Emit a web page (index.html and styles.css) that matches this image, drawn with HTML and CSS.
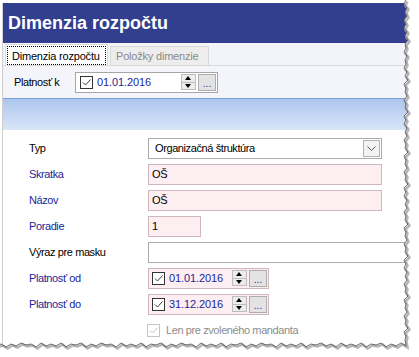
FILE: index.html
```html
<!DOCTYPE html>
<html lang="sk">
<head>
  <meta charset="UTF-8">
  <title>Dimenzia rozpočtu</title>
  <link rel="stylesheet" href="styles.css">
</head>
<body>
  <div class="shot">
    <div class="window">
      <div class="title">Dimenzia rozpočtu</div>

      <div class="tabs">
        <div class="tab active"><span>Dimenzia rozpočtu</span></div>
        <div class="tab">Položky dimenzie</div>
      </div>

      <div class="filter">
        <span class="lbl">Platnosť k</span>
        <div class="date plain">
          <span class="chk"><svg width="11" height="11" viewBox="0 0 11 11"><path d="M2 5.5 L4.5 8 L9.5 2.5" fill="none" stroke="#3c3c3c" stroke-width="1"/></svg></span>
          <span class="val">01.01.2016</span>
          <span class="spin"><i class="up"></i><i class="down"></i></span>
          <span class="more">...</span>
        </div>
      </div>

      <div class="band"></div>

      <div class="form">
        <label>Typ</label>
        <div class="field sel w-full">
          <span>Organizačná štruktúra</span>
          <span class="drop"><svg width="9" height="5" viewBox="0 0 9 5"><path d="M0.5 0.5 L4.5 4.5 L8.5 0.5" fill="none" stroke="#555" stroke-width="1"/></svg></span>
        </div>

        <label class="req">Skratka</label>
        <div class="field pink w-full">OŠ</div>

        <label class="req">Názov</label>
        <div class="field pink w-full">OŠ</div>

        <label class="req">Poradie</label>
        <div class="field pink w-short">1</div>

        <label>Výraz pre masku</label>
        <div class="field w-long"></div>

        <label class="req">Platnosť od</label>
        <div class="date pink">
          <span class="chk"><svg width="11" height="11" viewBox="0 0 11 11"><path d="M2 5.5 L4.5 8 L9.5 2.5" fill="none" stroke="#3c3c3c" stroke-width="1"/></svg></span>
          <span class="val">01.01.2016</span>
          <span class="spin"><i class="up"></i><i class="down"></i></span>
          <span class="more">...</span>
        </div>

        <label class="req">Platnosť do</label>
        <div class="date pink">
          <span class="chk"><svg width="11" height="11" viewBox="0 0 11 11"><path d="M2 5.5 L4.5 8 L9.5 2.5" fill="none" stroke="#3c3c3c" stroke-width="1"/></svg></span>
          <span class="val">31.12.2016</span>
          <span class="spin"><i class="up"></i><i class="down"></i></span>
          <span class="more">...</span>
        </div>

        <span></span>
        <div class="check off">
          <span class="chk"><svg width="11" height="11" viewBox="0 0 11 11"><path d="M2 5.5 L4.5 8 L9.5 2.5" fill="none" stroke="#c4c4c4" stroke-width="1"/></svg></span>
          <span>Len pre zvoleného mandanta</span>
        </div>
      </div>
    </div>

    <!-- torn paper edge -->
    <svg class="tear" width="419" height="357" viewBox="0 0 419 357">
      <path fill="#fff" d="M406,-2 L406,0 404,4 407,8 405,12 407,16 404,20 406,24 404,28 407,32 405,36 408,40 405,44 406,48 404,52 407,56 405,60 406,64 404,68 407,72 405,76 408,80 404,84 406,88 405,92 407,96 404,100 406,104 405,108 408,112 404,116 406,120 404,124 407,128 405,132 407,136 404,140 406,144 405,148 408,152 404,156 406,160 405,164 407,168 404,172 406,176 405,180 408,184 404,188 406,192 404,196 407,200 405,204 407,208 404,212 406,216 405,220 408,224 404,228 406,232 405,236 407,240 404,244 406,248 405,252 408,256 404,260 406,264 404,268 407,272 405,276 407,280 404,284 406,288 405,292 408,296 404,300 406,304 405,308 407,312 404,316 406,320 405,324 408,328 404,332 406,336 405,340 406,346 401,343 396,346 391,344 386,347 381,343 376,345 371,344 366,347 361,343 356,346 351,344 346,346 341,343 336,347 331,344 326,346 321,343 316,345 311,344 306,347 301,343 296,346 291,344 286,346 281,343 276,347 271,344 266,345 261,343 256,346 251,344 246,347 241,343 236,345 231,344 226,347 221,343 216,346 211,344 206,346 201,343 196,347 191,344 186,345 181,343 176,346 171,344 166,347 161,343 156,345 151,344 146,347 141,343 136,346 131,344 126,346 121,343 116,347 111,344 106,345 101,343 96,346 91,344 86,347 81,343 76,345 71,344 66,347 61,343 56,346 51,344 46,346 41,343 36,347 31,344 26,345 21,343 16,346 11,344 6,347 1,344 -2,345 L-2,360 L425,360 L425,-2 Z"/>
      <polyline class="shade" points="406,0 404,4 407,8 405,12 407,16 404,20 406,24 404,28 407,32 405,36 408,40 405,44 406,48 404,52 407,56 405,60 406,64 404,68 407,72 405,76 408,80 404,84 406,88 405,92 407,96 404,100 406,104 405,108 408,112 404,116 406,120 404,124 407,128 405,132 407,136 404,140 406,144 405,148 408,152 404,156 406,160 405,164 407,168 404,172 406,176 405,180 408,184 404,188 406,192 404,196 407,200 405,204 407,208 404,212 406,216 405,220 408,224 404,228 406,232 405,236 407,240 404,244 406,248 405,252 408,256 404,260 406,264 404,268 407,272 405,276 407,280 404,284 406,288 405,292 408,296 404,300 406,304 405,308 407,312 404,316 406,320 405,324 408,328 404,332 406,336 405,340 406,346 401,343 396,346 391,344 386,347 381,343 376,345 371,344 366,347 361,343 356,346 351,344 346,346 341,343 336,347 331,344 326,346 321,343 316,345 311,344 306,347 301,343 296,346 291,344 286,346 281,343 276,347 271,344 266,345 261,343 256,346 251,344 246,347 241,343 236,345 231,344 226,347 221,343 216,346 211,344 206,346 201,343 196,347 191,344 186,345 181,343 176,346 171,344 166,347 161,343 156,345 151,344 146,347 141,343 136,346 131,344 126,346 121,343 116,347 111,344 106,345 101,343 96,346 91,344 86,347 81,343 76,345 71,344 66,347 61,343 56,346 51,344 46,346 41,343 36,347 31,344 26,345 21,343 16,346 11,344 6,347 1,344 -2,345"/>
      <polyline class="edge" points="406,0 404,4 407,8 405,12 407,16 404,20 406,24 404,28 407,32 405,36 408,40 405,44 406,48 404,52 407,56 405,60 406,64 404,68 407,72 405,76 408,80 404,84 406,88 405,92 407,96 404,100 406,104 405,108 408,112 404,116 406,120 404,124 407,128 405,132 407,136 404,140 406,144 405,148 408,152 404,156 406,160 405,164 407,168 404,172 406,176 405,180 408,184 404,188 406,192 404,196 407,200 405,204 407,208 404,212 406,216 405,220 408,224 404,228 406,232 405,236 407,240 404,244 406,248 405,252 408,256 404,260 406,264 404,268 407,272 405,276 407,280 404,284 406,288 405,292 408,296 404,300 406,304 405,308 407,312 404,316 406,320 405,324 408,328 404,332 406,336 405,340 406,346 401,343 396,346 391,344 386,347 381,343 376,345 371,344 366,347 361,343 356,346 351,344 346,346 341,343 336,347 331,344 326,346 321,343 316,345 311,344 306,347 301,343 296,346 291,344 286,346 281,343 276,347 271,344 266,345 261,343 256,346 251,344 246,347 241,343 236,345 231,344 226,347 221,343 216,346 211,344 206,346 201,343 196,347 191,344 186,345 181,343 176,346 171,344 166,347 161,343 156,345 151,344 146,347 141,343 136,346 131,344 126,346 121,343 116,347 111,344 106,345 101,343 96,346 91,344 86,347 81,343 76,345 71,344 66,347 61,343 56,346 51,344 46,346 41,343 36,347 31,344 26,345 21,343 16,346 11,344 6,347 1,344 -2,345"/>
    </svg>
  </div>
</body>
</html>
```

FILE: styles.css
```css
body {
  margin: 0;
  background: #fff;
  font-family: "Liberation Sans", Arial, sans-serif;
  font-size: 11px;
  letter-spacing: -0.4px;
  color: #000;
}

.shot {
  position: relative;
  width: 419px;
  height: 357px;
  overflow: hidden;
}

.window {
  margin: 3px 0 0 2px;
  border-left: 1px solid #cfcfcf;
  width: 416px;
  height: 354px;
}

.title {
  height: 40px;
  line-height: 40px;
  padding-left: 5px;
  background: #323f8f;
  color: #fff;
  font-size: 18px;
  font-weight: bold;
  letter-spacing: 0;
}

.tabs {
  display: flex;
  align-items: flex-end;
  height: 22px;
  padding-left: 2px;
  background: #f2f4f9;
  border-bottom: 1px solid #d9d9d9;
  white-space: nowrap;
  letter-spacing: -0.2px;
}

.tab {
  box-sizing: border-box;
  height: 19px;
  width: 99px;
  margin-left: 2px;
  padding-left: 5px;
  line-height: 18px;
  background: #ededed;
  border: 1px solid #d9d9d9;
  border-bottom: none;
  color: #8a8a8a;
}

.tab.active {
  width: 103px;
  height: 21px;
  margin-left: 0;
  padding: 1px 1px 0 1px;
  background: #fff;
  color: #000;
}

.tab.active span {
  display: block;
  height: 19px;
  line-height: 18px;
  padding-left: 4px;
  border: 1px dotted #000;
  box-sizing: border-box;
}

.filter {
  display: flex;
  align-items: center;
  height: 32px;
  padding-left: 11px;
  background: #f3f5fa;
}

.lbl {
  width: 61px;
}

.band {
  height: 31px;
  border-top: 1px solid #7aa0dc;
  background: linear-gradient(#adc6ee, #d9e5f8);
}

.form {
  display: grid;
  grid-template-columns: 119px 1fr;
  grid-auto-rows: 26px;
  align-items: center;
  padding: 5px 0 0 26px;
}

.form label.req {
  color: #1b2796;
}

.field {
  box-sizing: border-box;
  height: 21px;
  line-height: 19px;
  padding-left: 3px;
  background: #fff;
  border: 1px solid #ababab;
}

.pink {
  background: #fdeef2;
  border-color: #cfb7bd;
}

.w-full { width: 234px; }
.w-short { width: 53px; }
.w-long { width: 300px; }

.sel {
  display: flex;
  align-items: center;
  justify-content: space-between;
  padding: 0 1px 0 6px;
}

.drop {
  display: flex;
  align-items: center;
  justify-content: center;
  width: 15px;
  height: 15px;
  background: #f3f3f3;
  border: 1px solid #b3b3b3;
}

.date {
  box-sizing: border-box;
  display: flex;
  align-items: center;
  width: 121px;
  height: 21px;
  padding-left: 3px;
  border: 1px solid #cfb7bd;
}

.date.plain {
  width: 143px;
  padding-left: 4px;
  background: #fff;
  border-color: #a6a6a6;
}

.chk {
  box-sizing: border-box;
  display: flex;
  width: 13px;
  height: 13px;
  background: #fff;
  border: 1px solid #333;
}

.date .val {
  margin-left: 4px;
  color: #1b2796;
  letter-spacing: -0.1px;
}

.spin {
  display: flex;
  flex-direction: column;
  margin-left: auto;
  width: 13px;
  height: 14px;
  border: 1px solid #bdbdbd;
  background: #ececec;
}

.spin i {
  flex: 1;
  position: relative;
}

.spin i.up {
  border-bottom: 1px solid #bdbdbd;
}

.spin i::after {
  content: "";
  position: absolute;
  left: 3px;
  top: 1px;
  border-left: 3.5px solid transparent;
  border-right: 3.5px solid transparent;
}

.spin i.up::after {
  border-bottom: 4px solid #000;
}

.spin i.down::after {
  border-top: 4px solid #000;
}

.more {
  box-sizing: border-box;
  width: 18px;
  height: 17px;
  margin: 0 1px 0 2px;
  line-height: 18px;
  text-align: center;
  font-size: 10px;
  letter-spacing: 0;
  color: #1b2796;
  background: #e3e3e3;
  border: 1px solid #adadad;
}

.check {
  display: flex;
  align-items: center;
  gap: 6px;
  margin-left: -1px;
}

.check.off {
  color: #8c8c8c;
}

.check.off .chk {
  border-color: #c4c4c4;
}

.tear {
  position: absolute;
  left: 0;
  top: 0;
}

.tear .shade {
  fill: none;
  stroke: #b5b5b5;
  stroke-width: 2.5;
  transform: translate(1.5px, 1.5px);
}

.tear .edge {
  fill: none;
  stroke: #4a4a4a;
  stroke-width: 0.8;
}
```
